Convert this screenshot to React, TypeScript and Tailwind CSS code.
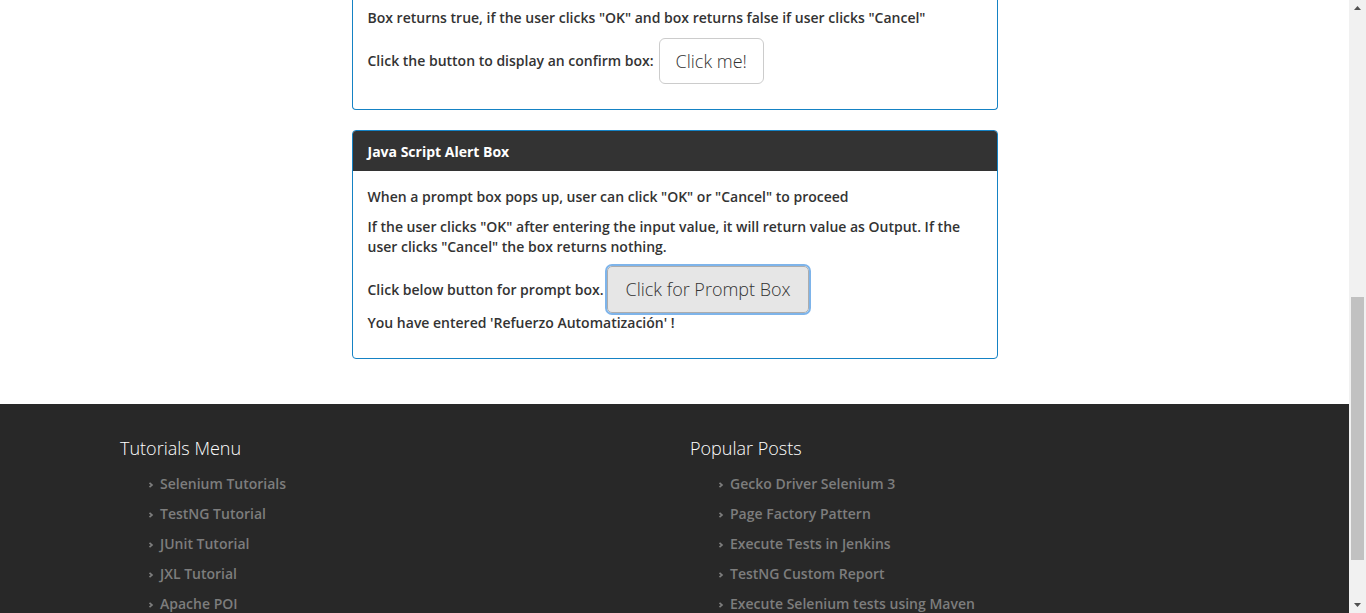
import React from 'react';

const tutorials = ['Selenium Tutorials', 'TestNG Tutorial', 'JUnit Tutorial', 'JXL Tutorial', 'Apache POI'];
const posts = [
  'Gecko Driver Selenium 3',
  'Page Factory Pattern',
  'Execute Tests in Jenkins',
  'TestNG Custom Report',
  'Execute Selenium tests using Maven',
];

function Chevron() {
  return (
    <svg width="6" height="8" viewBox="0 0 6 8" className="mr-[6px] mt-[3px] shrink-0">
      <path d="M1.5 1.8 L4 4 L1.5 6.2" fill="none" stroke="currentColor" strokeWidth="1.7" />
    </svg>
  );
}

function FooterColumn({ title, items }: { title: string; items: string[] }) {
  return (
    <div className="w-[570px]">
      <h3 className="text-[18px] leading-[24px] text-white font-light">{title}</h3>
      <ul className="mt-[8px] pl-[28px]">
        {items.map((item) => (
          <li key={item} className="flex items-center h-[30px] text-[14px] font-semibold text-[#7d7d7d]">
            <Chevron />
            <span>{item}</span>
          </li>
        ))}
      </ul>
    </div>
  );
}

export default function App() {
  return (
    <div
      className="flex h-[613px] w-[1366px] overflow-hidden bg-white text-[#333]"
      style={{ fontFamily: '"Open Sans", "Noto Sans", sans-serif' }}
    >
      <div className="flex w-[1349px] flex-col">
        <div className="flex flex-col items-center">
          {/* Confirm box panel (top is scrolled away) */}
          <div className="w-[646px] rounded-b-[4px] border-x border-b border-[#1582c4] px-[15px] pb-[15px] pt-[8px] text-[14px] font-semibold">
            <p className="mb-[10px] leading-[20px]">
              Box returns true, if the user clicks "OK" and box returns false if user clicks "Cancel"
            </p>
            <p className="mb-[10px] flex items-center gap-[5px] mt-[10px]">
              <span className="leading-[20px]">Click the button to display an confirm box:</span>
              <button
                className="h-[46px] rounded-[6px] border border-[#ccc] bg-white px-[16px] text-[18px] font-light text-[#333]"
                style={{ fontFamily: '"Open Sans", sans-serif' }}
              >
                Click me!
              </button>
            </p>
          </div>

          {/* Prompt box panel */}
          <div className="mt-[20px] w-[646px] overflow-hidden rounded-[4px] border border-[#1582c4] text-[14px] font-semibold">
            <div className="flex h-[40px] items-center bg-[#333] px-[15px] text-[14px] font-bold text-white">
              Java Script Alert Box
            </div>
            <div className="px-[15px] pb-[15px] pt-[16px]">
              <p className="mb-[10px] leading-[20px]">When a prompt box pops up, user can click "OK" or "Cancel" to proceed</p>
              <p className="mb-[9px] leading-[20px]">
                If the user clicks "OK" after entering the input value, it will return value as Output. If the user clicks "Cancel" the box returns nothing.
              </p>
              <div className="flex items-center gap-[4px]">
                <span className="leading-[20px]">Click below button for prompt box.</span>
                <button
                  className="h-[47px] rounded-[5px] border border-[#adadad] bg-[#e6e6e6] px-[17px] text-[18px] font-light text-[#333] outline outline-2 outline-[#7eb4ea]"
                  style={{ fontFamily: '"Open Sans", sans-serif' }}
                >
                  Click for Prompt Box
                </button>
              </div>
              <p className="mb-[10px] leading-[20px]">You have entered 'Refuerzo Automatización' !</p>
            </div>
          </div>
        </div>

        {/* Footer */}
        <footer className="mt-[45px] flex flex-1 bg-[#282828] pl-[120px] pt-[32px]">
          <FooterColumn title="Tutorials Menu" items={tutorials} />
          <FooterColumn title="Popular Posts" items={posts} />
        </footer>
      </div>

      {/* Fake browser scrollbar */}
      <div className="relative w-[17px] bg-[#f1f1f1]">
        <svg width="17" height="17" viewBox="0 0 17 17" className="absolute left-0 top-0">
          <path d="M5 10 L8.5 6 L12 10 Z" fill="#505050" />
        </svg>
        <div className="absolute left-[2px] top-[297px] h-[263px] w-[13px] bg-[#c1c1c1]" />
        <svg width="17" height="17" viewBox="0 0 17 17" className="absolute bottom-0 left-0">
          <path d="M5 7 L8.5 11 L12 7 Z" fill="#505050" />
        </svg>
      </div>
    </div>
  );
}
